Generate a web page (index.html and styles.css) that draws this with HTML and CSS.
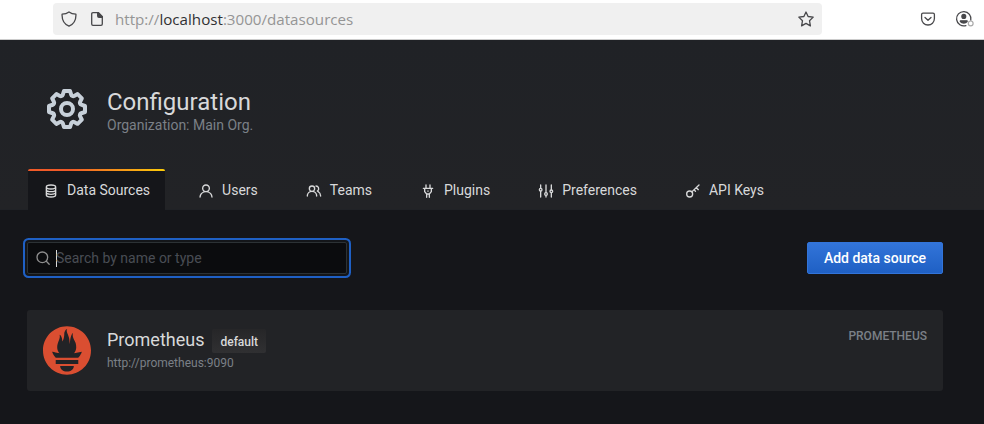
FILE: index.html
```html
<!DOCTYPE html>
<html lang="en">
<head>
<meta charset="utf-8">
<title>Configuration: Data Sources</title>
<link rel="stylesheet" href="styles.css">
</head>
<body>
<div class="browser">
  <div class="address">
    <svg class="line" width="16" height="16" viewBox="0 0 16 16"><path d="M8 .9C6 2.4 3.6 3 1.1 3.1C.8 8 2.8 13.100 8 15.200C13.200 13.100 15.200 8 14.900 3.100C12.400 3 10 2.400 8 .9Z"/></svg>
    <svg class="line file" width="16" height="16" viewBox="0 0 16 16"><path d="M4 1.700H9.300L13.300 5.700V13Q13.300 14.300 12 14.300H4Q2.700 14.300 2.700 13V3Q2.700 1.700 4 1.700Z"/><path class="solid" d="M8.700 1.700V5Q8.700 6.300 10 6.300H13.300V5.600L9.400 1.700Z"/></svg>
    <span class="url">http://<b>localhost</b>:3000/datasources</span>
    <svg class="line star" width="16" height="16" viewBox="0 0 16 16"><path d="M8 1L10.100 5.500L15.200 6.100L11.500 9.700L12.400 14.900L8 12.400L3.600 14.900L4.500 9.700L.8 6.100L5.900 5.500Z"/></svg>
  </div>
  <svg class="line pocket" width="16" height="16" viewBox="0 0 16 16"><path d="M3 2.200H13Q14.400 2.200 14.400 3.600V7.500C14.400 11.500 11.500 14 8 14S1.600 11.500 1.600 7.500V3.600Q1.600 2.200 3 2.200ZM5 6.500L8 9.300L11 6.500"/></svg>
  <svg class="line account" width="19" height="18" viewBox="0 0 19 18"><path d="M15.800 10.200A7.200 7.200 0 1 0 10.900 15.600"/><circle class="solid" cx="8.800" cy="6.400" r="1.900"/><path class="solid" d="M5.400 10.800H12.100V11.500Q10.900 13 8.800 13T5.400 11.500Z"/><circle class="dot" cx="15.700" cy="13.400" r="2.400"/></svg>
</div>

<header class="page-header">
  <div class="heading">
    <svg class="cog" width="48" height="48" viewBox="0 0 24 24"><path d="M21.320,9.550l-1.890-.63.890-1.780A1,1,0,0,0,20.130,6L18,3.870a1,1,0,0,0-1.150-.19l-1.780.89-.63-1.890A1,1,0,0,0,13.500,2h-3a1,1,0,0,0-.95.680L8.920,4.570,7.140,3.680A1,1,0,0,0,6,3.870L3.870,6a1,1,0,0,0-.19,1.150l.89,1.780-1.890.63A1,1,0,0,0,2,10.500v3a1,1,0,0,0,.68.950l1.890.63-.89,1.780A1,1,0,0,0,3.870,18L6,20.130a1,1,0,0,0,1.150.19l1.780-.89.630,1.890a1,1,0,0,0,.95.680h3a1,1,0,0,0,.95-.68l.63-1.890,1.780.89A1,1,0,0,0,18,20.130L20.130,18a1,1,0,0,0,.19-1.150l-.89-1.780,1.890-.63A1,1,0,0,0,22,13.500v-3A1,1,0,0,0,21.320,9.550ZM20,12.780l-1.200.4A2,2,0,0,0,17.640,16l.57,1.140-1.100,1.100L16,17.640a2,2,0,0,0-2.790,1.160l-.4,1.200H11.220l-.4-1.200A2,2,0,0,0,8,17.640l-1.140.57-1.100-1.100L6.360,16A2,2,0,0,0,5.200,13.180L4,12.780V11.220l1.200-.4A2,2,0,0,0,6.360,8L5.790,6.890l1.100-1.100L8,6.360A2,2,0,0,0,10.820,5.200l.4-1.200h1.560l.4,1.200A2,2,0,0,0,16,6.360l1.140-.57,1.100,1.100L17.640,8a2,2,0,0,0,1.160,2.790l1.200.4ZM12,8a4,4,0,1,0,4,4A4,4,0,0,0,12,8Zm0,6a2,2,0,1,1,2-2A2,2,0,0,1,12,14Z"/></svg>
    <div>
      <h1>Configuration</h1>
      <div class="subtitle">Organization: Main Org.</div>
    </div>
  </div>
  <nav class="tabs">
    <a class="tab active"><svg class="stroke" viewBox="0 0 24 24"><path d="M5 6C5 2 19 2 19 6V18C19 22 5 22 5 18ZM5 6C5 10 19 10 19 6M5 10C5 14 19 14 19 10M5 14C5 18 19 18 19 14M8.500 12.500V12.600M8.500 16.500V16.600M8.500 8.700V8.800"/></svg>Data Sources</a>
    <a class="tab"><svg viewBox="0 0 24 24"><path d="M15.710,12.710a6,6,0,1,0-7.420,0,10,10,0,0,0-6.220,8.180,1,1,0,0,0,2,.22,8,8,0,0,1,15.900,0,1,1,0,0,0,1,.89h.11a1,1,0,0,0,.88-1.100A10,10,0,0,0,15.710,12.710ZM12,12a4,4,0,1,1,4-4A4,4,0,0,1,12,12Z"/></svg>Users</a>
    <a class="tab"><svg viewBox="0 0 24 24"><path d="M12.300,12.220A4.920,4.920,0,0,0,14,8.500a5,5,0,0,0-10,0,4.920,4.920,0,0,0,1.700,3.720A8,8,0,0,0,1,19.500a1,1,0,0,0,2,0,6,6,0,0,1,12,0,1,1,0,0,0,2,0A8,8,0,0,0,12.300,12.220ZM9,11.500a3,3,0,1,1,3-3A3,3,0,0,1,9,11.500Zm9.740.32A5,5,0,0,0,15,3.500a1,1,0,0,0,0,2,3,3,0,0,1,3,3,3,3,0,0,1-1.500,2.590,1,1,0,0,0-.5.840,1,1,0,0,0,.45.860l.39.260.13.070a7,7,0,0,1,4,6.380,1,1,0,0,0,2,0A9,9,0,0,0,18.740,11.820Z"/></svg>Teams</a>
    <a class="tab"><svg class="stroke" viewBox="0 0 24 24"><path d="M9 3V7M15 3V7M5 8H19M7 8V13L10 16.500H14L17 13V8M10 17V21.500M14 17V21.500M12 12V12.500"/></svg>Plugins</a>
    <a class="tab"><svg class="stroke" viewBox="0 0 24 24"><path d="M4 3V7.500M4 12.500V21M12 3V14M12 19V21M20 3V10M20 15V21"/><circle cx="4" cy="10" r="2"/><circle cx="12" cy="16.500" r="2"/><circle cx="20" cy="12.500" r="2"/></svg>Preferences</a>
    <a class="tab"><svg class="stroke" viewBox="0 0 24 24"><circle cx="7" cy="16.500" r="4.500"/><path d="M10.200 13.300L21 3M17 7L20 10M13.500 10.200L15.700 12.400"/></svg>API Keys</a>
  </nav>
</header>

<main>
  <div class="actions">
    <div class="search">
      <svg width="16" height="16" viewBox="0 0 24 24"><circle cx="11" cy="11" r="8"/><path d="M17 17L21.300 21.300"/></svg>
      <span class="caret"></span><span>Search by name or type</span>
    </div>
    <button class="add">Add data source</button>
  </div>
  <section class="card">
    <svg class="logo" width="48" height="49" viewBox="0 0 113.333 114.700" preserveAspectRatio="none"><path d="M56.667,0.667C25.372,0.667,0,26.036,0,57.332c0,31.295,25.372,56.666,56.667,56.666s56.666-25.371,56.666-56.666C113.333,26.036,87.961,0.667,56.667,0.667zM56.667,106.722c-8.904,0-16.123-5.948-16.123-13.283H72.790C72.790,100.773,65.571,106.722,56.667,106.722zM83.297,89.040H30.034v-9.658h53.264V89.040zM83.106,74.411h-52.920c-0.176-0.203-0.356-0.403-0.526-0.609c-5.452-6.620-6.736-10.076-7.983-13.598c-0.021-0.116,6.611,1.355,11.314,2.413c0,0,2.420,0.560,5.958,1.205c-3.397-3.982-5.414-9.044-5.414-14.218c0-11.359,8.712-21.285,5.569-29.308c3.059,0.249,6.331,6.456,6.552,16.161c3.252-4.494,4.613-12.701,4.613-17.733c0-5.210,3.433-11.262,6.867-11.469c-3.061,5.045,0.793,9.370,4.219,20.099c1.285,4.030,1.121,10.812,2.113,15.113C63.797,33.534,65.333,20.500,71,16c-2.500,5.667,0.370,12.758,2.333,16.167c3.167,5.500,5.087,9.667,5.087,17.548c0,5.284-1.951,10.259-5.242,14.148c3.742-0.702,6.326-1.335,6.326-1.335l12.152-2.371C91.657,60.156,89.891,67.418,83.106,74.411z"/></svg>
    <div class="details">
      <div class="name">Prometheus<span class="badge">default</span></div>
      <div class="source-url">http://prometheus:9090</div>
    </div>
    <div class="kind">PROMETHEUS</div>
  </section>
</main>
</body>
</html>
```
FILE: styles.css
```css
* { box-sizing: border-box; }
body {
  margin: 0;
  height: 424px;
  overflow: hidden;
  background: #15161a;
  color: #d8d9da;
  font: 14px/20px Roboto, "Liberation Sans", sans-serif;
}
svg { display: block; flex: none; fill: currentColor; }

.browser {
  display: flex;
  align-items: center;
  height: 40px;
  padding: 0 9px 2px 53px;
  background: #fff;
  border-bottom: 1px solid #ccc;
  color: #48484b;
}
.address {
  display: flex;
  align-items: center;
  width: 769px;
  height: 32px;
  padding: 0 8px;
  margin-top: 1px;
  border-radius: 4px;
  background: #f0f0f0;
}
.line { fill: none; stroke: currentColor; stroke-width: 1.3; stroke-linejoin: round; stroke-linecap: round; }
.solid { fill: currentColor; }
.file { margin-left: 12px; }
.dot { stroke: #aaa; stroke-width: 1.2; }
.url {
  margin-left: 10px;
  color: #959595;
  font: 15.150px/20px "Open Sans", "Noto Sans", sans-serif;
  white-space: nowrap;
}
.url b { color: #303033; font-weight: 400; }
.star { margin-left: auto; }
.pocket { margin-left: 98px; }
.account { margin-left: 19px; }

.page-header {
  height: 170px;
  padding: 45px 28px 0;
  background: linear-gradient(#202226, #222326);
  border-bottom: 1px solid #202226;
}
.heading { display: flex; height: 84px; padding-left: 15px; }
.cog { color: #c7d0d9; }
.heading > div { margin-left: 16px; padding-top: 4px; }
h1 { margin: 0; font-size: 24px; line-height: 26px; font-weight: 400; }
.subtitle { color: #7b8087; line-height: 20px; }
.tabs { display: flex; gap: 18px; }
.tab {
  display: flex;
  align-items: center;
  height: 41px;
  padding: 1px 15px 0;
  border-radius: 2px 2px 0 0;
  color: #d8d9da;
}
.tab svg { width: 16px; height: 16px; margin: 2px 8px 0 0; }
.tab .stroke { fill: none; stroke: currentColor; stroke-width: 2; stroke-linecap: round; stroke-linejoin: round; }
.active { background: linear-gradient(90deg, #f05a28 30%, #fbca0a 99%) top / 100% 2px no-repeat #15161a; }

main { padding: 32px 41px 0 27px; }
.actions { display: flex; justify-content: space-between; }
.search {
  display: flex;
  align-items: center;
  width: 320px;
  height: 32px;
  padding-left: 7px;
  border: 1px solid #2c3235;
  border-radius: 2px;
  background: #0b0c0e;
  box-shadow: 0 0 0 2px #141619, 0 0 0 4px #1f60c4;
  color: #494d54;
}
.search svg { fill: none; stroke: #8e8e8e; stroke-width: 2; stroke-linecap: round; }
.caret { width: 1px; height: 17px; margin-left: 5px; margin-right: -1px; background: #d8d9da; }
.add {
  width: 136px;
  height: 32px;
  padding: 0;
  border: 1px solid #3274d9;
  border-radius: 2px;
  background: linear-gradient(#3274d9, #1f60c4);
  color: #fff;
  font: 500 14px/30px Roboto, sans-serif;
}
.card {
  display: flex;
  height: 81px;
  margin-top: 36px;
  padding: 16px;
  border-radius: 3px;
  background: #222326;
}
.logo { color: #da4e31; }
.details { margin-left: 16px; }
.name { display: flex; height: 28px; font-size: 18px; line-height: 27px; }
.badge {
  height: 24px;
  margin: 3px 0 0 8px;
  padding: 0 8px;
  border-radius: 2px;
  background: linear-gradient(#262628, #303032);
  font: 500 12px/26px Roboto, sans-serif;
}
.source-url { color: #7b8087; font-size: 12px; line-height: 18px; }
.kind { margin-left: auto; color: #7b8087; font-size: 12px; font-weight: 500; }
```
